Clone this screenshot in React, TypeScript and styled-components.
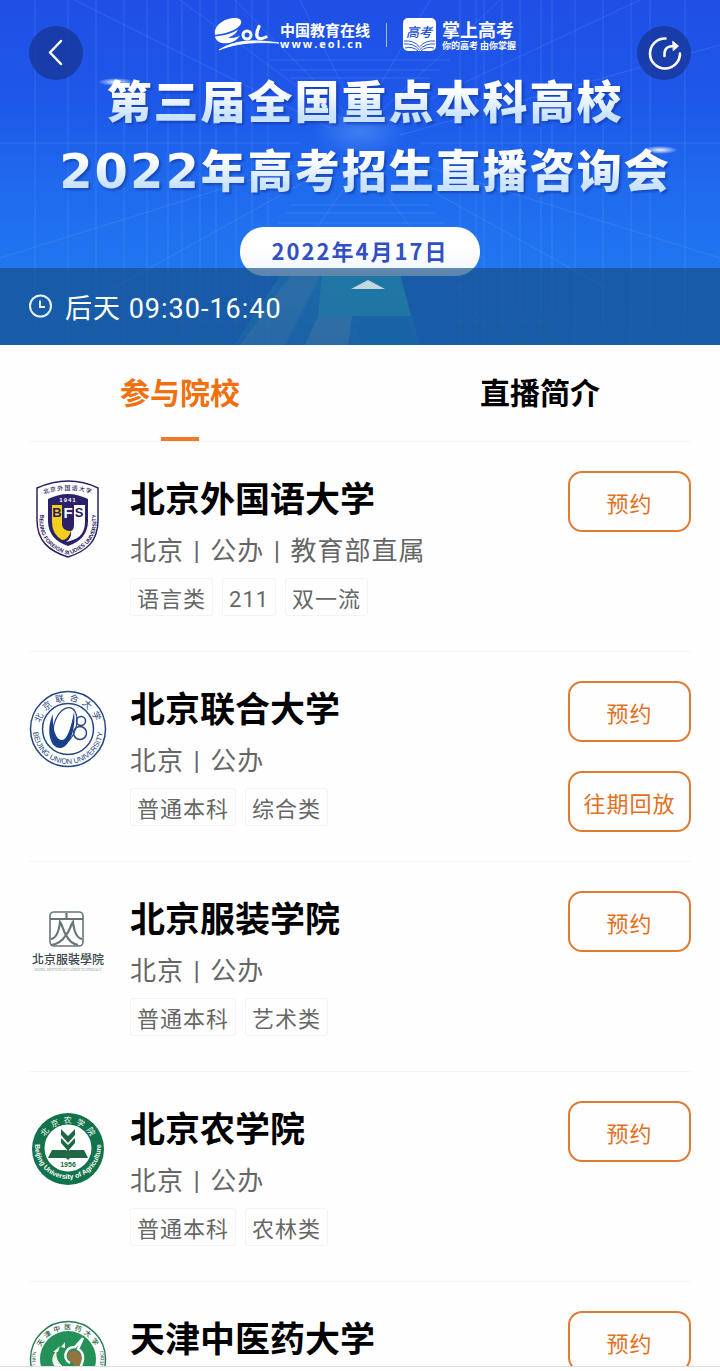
import React, { useState } from 'react';
import styled, { createGlobalStyle } from 'styled-components';

const cjk = `'Noto Sans CJK SC', sans-serif`;
const ui = `Roboto, ${cjk}`;
const orange = '#e2701c';

const GlobalStyle = createGlobalStyle`
  *, *::before, *::after { box-sizing: border-box; }
  body { margin: 0; background: #fefefe; font-family: ${ui}; color: #000; }
  button { font: inherit; padding: 0; cursor: pointer; }
  h1, h2, p, ul { margin: 0; padding: 0; }
`;

const Page = styled.div`
  display: flex;
  flex-direction: column;
  height: 100vh;
`;

/* ---------- hero ---------- */

const Hero = styled.header`
  position: relative;
  flex: none;
  display: flex;
  flex-direction: column;
  align-items: center;
  padding-bottom: 69px;
  overflow: hidden;
  background: linear-gradient(#1f4fe6 0%, #1e58e9 30%, #1f6bee 55%, #2176f0 78%, #2378ee 100%);
`;

const Backdrop = styled.svg`
  position: absolute;
  inset: 0;
  width: 100%;
  height: 100%;
`;

const TopBar = styled.div`
  position: relative;
  align-self: stretch;
  display: flex;
  justify-content: space-between;
  align-items: flex-start;
  height: 65px;
  padding: 16px 29px 0;
`;

const RoundButton = styled.button`
  display: grid;
  place-items: center;
  flex: none;
  width: 54px;
  height: 54px;
  margin-top: 10px;
  border: 0;
  border-radius: 50%;
  background: rgba(22, 50, 140, 0.68);
`;

const Brands = styled.div`
  display: flex;
  align-items: center;
  height: 38px;
  padding-left: 10px;
  color: #fff;
`;

const BrandText = styled.div`
  display: flex;
  flex-direction: column;
`;

const BrandName = styled.span<{ $large?: boolean }>`
  font: 700 ${p => (p.$large ? 18 : 15)}px/${p => (p.$large ? 20 : 17)}px ${cjk};
  white-space: nowrap;
`;

const BrandSite = styled.span`
  font: 700 11px/11px 'Open Sans', sans-serif;
  letter-spacing: 2px;
`;

const BrandSlogan = styled.span`
  font: 700 9px/13px ${cjk};
  white-space: nowrap;
`;

const BrandDivider = styled.i`
  width: 1px;
  height: 24px;
  margin: 0 16px;
  background: rgba(255, 255, 255, 0.6);
`;

const Title = styled.h1`
  position: relative;
  padding-left: 10px;
  text-align: center;
  filter: drop-shadow(2px 2px 1px rgba(15, 50, 160, 0.6));
`;

const TitleLine = styled.span`
  display: block;
  height: 69px;
  font: 900 45px/69px ${cjk};
  letter-spacing: 2px;
  white-space: nowrap;
  color: transparent;
  background: linear-gradient(#fff 35%, #c9e2ff 75%);
  background-clip: text;
  -webkit-background-clip: text;
`;

const Year = styled.span`
  font: 700 48px/60px 'DejaVu Sans', sans-serif;
  letter-spacing: 2px;
`;

const DatePill = styled.p`
  position: relative;
  width: 240px;
  height: 49px;
  margin-top: 24px;
  border-radius: 24px;
  background: linear-gradient(#fff 40%, #eef4ff);
  color: #3150c4;
  font: 700 22px/46px ${cjk};
  letter-spacing: 2px;
  text-align: center;
`;

const TimeBar = styled.div`
  position: absolute;
  inset: auto 0 0;
  display: flex;
  align-items: center;
  gap: 12px;
  height: 77px;
  padding: 0 28px;
  background: rgba(20, 78, 130, 0.66);
  color: #fff;
  font-size: 27px;
  letter-spacing: 1px;
`;

/* ---------- tabs ---------- */

const Tabs = styled.div`
  flex: none;
  display: flex;
  height: 97px;
  margin: 0 29px;
  border-bottom: 1px solid #f5f5f5;
`;

const Tab = styled.button<{ $active: boolean }>`
  position: relative;
  flex: 1;
  border: 0;
  background: none;
  color: ${p => (p.$active ? '#f07010' : '#000')};
  font: 700 30px/92px ${cjk};
  padding-bottom: 6px;

  &:first-child { margin-left: -29px; }
  &:last-child { margin-right: -29px; }

  &::after {
    content: '';
    position: absolute;
    left: 50%;
    bottom: 0;
    width: 38px;
    height: 4px;
    margin-left: -19px;
    background: ${p => (p.$active ? '#f07a24' : 'transparent')};
  }
`;

/* ---------- school list ---------- */

const List = styled.ul`
  flex: 1;
  min-height: 0;
  overflow-y: auto;
  scrollbar-width: none;
  padding: 0 29px;
  list-style: none;
`;

const Row = styled.li`
  display: grid;
  grid-template-columns: 78px 1fr auto;
  column-gap: 23px;
  align-items: start;
  min-height: 210px;
  border-bottom: 1px solid #f6f6f6;
`;

const Crest = styled.svg`
  width: 78px;
  height: 78px;
  margin-top: 38px;
`;

const Info = styled.div`
  padding-top: 30px;
`;

const Name = styled.h2`
  font: 700 35px/50px ${cjk};
`;

const Meta = styled.p`
  padding-top: 3px;
  color: #666;
  font-size: 26px;
  line-height: 52px;
  letter-spacing: 1px;
`;

const Bar = styled.span`
  margin: 0 2px;
`;

const TagList = styled.div`
  display: flex;
  gap: 9px;
  padding-top: 1px;
`;

const Tag = styled.span`
  height: 38px;
  padding: 2px 6px 0;
  border: 1px solid #f3f3f3;
  border-radius: 3px;
  color: #666;
  font-size: 22px;
  line-height: 38px;
  letter-spacing: 1px;
`;

const Actions = styled.div`
  display: flex;
  flex-direction: column;
  gap: 29px;
  padding-top: 29px;
`;

const ActionButton = styled.button`
  width: 123px;
  height: 61px;
  border: 2px solid #e07b35;
  border-radius: 14px;
  background: none;
  color: ${orange};
  font-size: 22px;
  letter-spacing: 1px;
`;

const BottomEdge = styled.footer`
  flex: none;
  height: 5px;
  border-top: 1px solid #ddd;
  background: #fefefe;
`;

/* ---------- drawings ---------- */

const columns = [35, 68, 96, 124, 147, 168, 182, 200, 216, 236, 252, 268, 460, 476, 484, 502, 520, 541, 552, 575, 603, 631, 650, 685];

const HeroBackdrop = () => (
  <Backdrop viewBox="0 0 720 345" preserveAspectRatio="none" aria-hidden="true">
    <defs>
      <linearGradient id="beam" x1="0" y1="0" x2="0" y2="1">
        <stop offset="0" stopColor="#4bd7f0" stopOpacity="0" />
        <stop offset="0.5" stopColor="#43e0e6" stopOpacity="0.5" />
        <stop offset="1" stopColor="#3aa5ee" stopOpacity="0.5" />
      </linearGradient>
      <radialGradient id="core">
        <stop offset="0" stopColor="#79bcff" stopOpacity="0.35" />
        <stop offset="1" stopColor="#79bcff" stopOpacity="0" />
      </radialGradient>
      <radialGradient id="flare">
        <stop offset="0" stopColor="#fff" stopOpacity="0.95" />
        <stop offset="1" stopColor="#fff" stopOpacity="0" />
      </radialGradient>
    </defs>
    <g stroke="#7cb6ff" strokeOpacity="0.2" fill="none">
      {columns.map(x => <path key={x} d={`M${x} 0V345`} />)}
      <path d="M0 143H300M420 143H720M270 60H450M280 70H440M290 78H430M290 205H430M286 213H436M278 223H444M262 237H462M240 257H482M200 288H520M170 322H550" />
      <path d="M75 0 330 128M180 0 340 118M235 0 345 112M300 0 352 105M430 0 368 105M500 0 380 112M640 0 385 120M720 45 400 135M0 258 330 155M110 290 335 165M235 345 350 180M500 345 375 180M610 290 385 165M720 258 390 155" />
    </g>
    <path d="M335 225H385L420 345H235L285 268Z" fill="url(#beam)" opacity="0.7" />
    <path d="M322 274H400L411 316H318Z" fill="#3fdfe0" opacity="0.6" />
    <path d="M290 276H320L285 345H240Z" fill="#9cc6e6" opacity="0.35" />
    <path d="M318 316H352L348 345H305Z" fill="#9cc6e6" opacity="0.5" />
    <path d="M360 318H408L415 345H357Z" fill="#1f8be8" opacity="0.8" />
    <ellipse cx="360" cy="132" rx="48" ry="24" fill="url(#core)" />
    <ellipse cx="116" cy="82" rx="18" ry="4" fill="url(#flare)" />
    <ellipse cx="660" cy="150" rx="18" ry="4" fill="url(#flare)" />
  </Backdrop>
);

const PillArrow = styled.svg`
  position: absolute;
  left: 50%;
  top: 12px;
  margin-left: -9px;
`;

const EolMark = () => (
  <svg width="66" height="36" viewBox="0 0 66 36" role="img" aria-label="eol">
    <path d="M1 18C-1 9 10 1 21 1C29 1 29 7 23 11C17 15 8 17 1 18Z" fill="#fff" />
    <path d="M1 19.500C10 18.500 18 16.500 24 12.500C22 17 18 19.500 14 20.500C18 21.500 23 20.500 26 18.500C21 28 3 29.500 1 19.500Z" fill="#fff" />
    <ellipse cx="33" cy="18" rx="4" ry="4" fill="none" stroke="#fff" strokeWidth="3" />
    <path d="M45 9.500C43 14 42 19.500 44 21C46.500 22 49.500 21.500 52 20" fill="none" stroke="#fff" strokeWidth="3.200" strokeLinecap="round" />
    <path d="M5 33C20 23 40 22 65 26C45 25 24 25 5 33Z" fill="#fff" stroke="#fff" strokeWidth="0.800" />
  </svg>
);

const GaokaoMark = () => (
  <svg width="39" height="34" viewBox="0 0 39 34" role="img" aria-label="高考">
    <rect width="33" height="33" rx="5" fill="#fff" />
    <text x="16" y="19" textAnchor="middle" fontFamily="'Noto Sans CJK SC', sans-serif" fontSize="13" fontWeight="500" fontStyle="italic" fill="#2150d8">高考</text>
    <path d="M1 23Q11 22 16.500 29Q22 22 32 23M1 26Q11 25 16.500 32Q22 25 32 26M2 30Q10 28 15 33M31 30Q23 28 18 33" fill="none" stroke="#2458df" strokeWidth="1" />
  </svg>
);

const BackIcon = () => (
  <svg width="30" height="30" viewBox="0 0 30 30" fill="none" stroke="#fff" strokeWidth="2.500" strokeLinecap="round" strokeLinejoin="round">
    <path d="M20 3 9 14.500 20 26" />
  </svg>
);

const ShareIcon = () => (
  <svg width="36" height="36" viewBox="0 0 36 36" fill="none" stroke="#fff" strokeWidth="2.600" strokeLinecap="round">
    <path d="M19.500 3.500A15 15 0 1 0 34 18.500" />
    <path d="M18.500 21C18 14 21 11 28 11" />
    <path d="M27 6.500 32.500 11 27.500 15.500Z" fill="#fff" strokeWidth="1" strokeLinejoin="round" />
  </svg>
);

const ClockIcon = () => (
  <svg width="25" height="26" viewBox="0 0 25 26" fill="none" stroke="#e8f2fb" strokeWidth="2">
    <circle cx="12.500" cy="12" r="10.500" />
    <path d="M12 6.500V13H17" />
  </svg>
);

const BfsuCrest = () => (
  <Crest viewBox="0 0 78 78" role="img" aria-label="北京外国语大学校徽">
    <defs>
      <path id="bfsu-top" d="M10 16Q39 4 68 16" />
      <path id="bfsu-rim" d="M10.500 24V40C10.500 60 22 69 39 75C56 69 67.500 60 67.500 40V24" />
    </defs>
    <path d="M39 1C51 1 61 4 69 8V40C69 61 58 71 39 77C20 71 8 61 8 40V8C17 4 27 1 39 1Z" fill="#fff" stroke="#2b2360" strokeWidth="1.500" />
    <path d="M39 14C46 14 53 16 59 19V41C59 54 51 62 39 66C27 62 19 54 19 41V19C25 16 32 14 39 14Z" fill="#2a2168" />
    <path d="M23 25H33V45Q34 51 42 51Q39 60 33 60Q23 54 23 42Z" fill="#f6cf1c" />
    <path d="M45 25H56V42C56 55 48 60 37 62Q43 58 42 51Q45 50 45 45Z" fill="#fff" />
    <g fontFamily="'Liberation Sans', sans-serif" fontWeight="700" textAnchor="middle">
      <text x="28" y="37" fontSize="13" fill="#231b58">B</text>
      <text x="39" y="38" fontSize="15" fill="#fff">F</text>
      <text x="50" y="37" fontSize="13" fill="#231b58">S</text>
      <text x="39" y="22" fontSize="6" letterSpacing="1" fill="#fff">1941</text>
    </g>
    <text fontFamily="'Noto Sans CJK SC', sans-serif" fontSize="6" fontWeight="500" fill="#2b2360" letterSpacing="1"><textPath href="#bfsu-top" startOffset="50%" textAnchor="middle">北京外国语大学</textPath></text>
    <text fontFamily="'Liberation Sans', sans-serif" fontSize="5.500" fontWeight="700" fill="#2b2360"><textPath href="#bfsu-rim" startOffset="50%" textAnchor="middle">BEIJING FOREIGN STUDIES UNIVERSITY</textPath></text>
  </Crest>
);

const BuuCrest = () => (
  <Crest viewBox="0 0 78 78" role="img" aria-label="北京联合大学校徽">
    <defs>
      <path id="buu-top" d="M11 39A28 28 0 0 1 67 39" />
      <path id="buu-rim" d="M4.500 33A35 35 0 1 0 73.500 33" />
    </defs>
    <g fill="none" stroke="#24477f">
      <circle cx="39" cy="39" r="37.500" strokeWidth="1.500" />
      <circle cx="39" cy="39" r="25.500" strokeWidth="1.500" />
      <ellipse cx="36" cy="36" rx="11" ry="19" transform="rotate(18 36 36)" strokeWidth="1.200" />
      <circle cx="52" cy="31" r="4.500" strokeWidth="1.500" />
      <circle cx="51" cy="43" r="6.500" strokeWidth="1.500" />
    </g>
    <path d="M24 24C17 38 20 59 32 58C42 56 47 36 45 22C42 38 38 50 33 50C26 50 23 36 24 24Z" fill="#173f8a" />
    <text fontFamily="'Noto Sans CJK SC', sans-serif" fontSize="9" fill="#24477f" letterSpacing="4"><textPath href="#buu-top" startOffset="51%" textAnchor="middle">北京联合大学</textPath></text>
    <text fontFamily="'Liberation Sans', sans-serif" fontSize="7.500" fill="#24477f"><textPath href="#buu-rim" startOffset="50%" textAnchor="middle">BEIJING UNION UNIVERSITY</textPath></text>
  </Crest>
);

const BiftCrest = () => (
  <Crest viewBox="0 0 78 78" role="img" aria-label="北京服装学院标志">
    <rect x="21" y="12" width="33" height="34" rx="4" fill="none" stroke="#68757a" strokeWidth="1.600" />
    <path d="M21 19H54M37.500 13V19M22 39C28 38 30 31 31 22C34 26 34 31 37 35C41 31 41 26 44 22C45 31 47 38 53 39M22 45C30 44 34 40 37 35C40 41 43 44 49 45" fill="none" stroke="#68757a" strokeWidth="2.200" />
    <text x="39" y="64" textAnchor="middle" fontFamily="'Noto Sans CJK TC', serif" fontSize="12" fontWeight="500" fill="#39464b">北京服裝學院</text>
    <text x="39" y="71" textAnchor="middle" fontFamily="'Liberation Serif', serif" fontSize="3" fill="#8a9498">BEIJING INSTITUTE OF FASHION TECHNOLOGY</text>
  </Crest>
);

const BuaCrest = () => (
  <Crest viewBox="0 0 78 78" role="img" aria-label="北京农学院校徽">
    <defs>
      <path id="bua-top" d="M13 39A26 26 0 0 1 65 39" />
      <path id="bua-rim" d="M6 36A33 33 0 1 0 72 36" />
    </defs>
    <circle cx="39" cy="39" r="36" fill="#12724a" />
    <circle cx="39" cy="38" r="23.500" fill="#fff" />
    <path d="M39 26 32 19V25L39 33 46 25V19ZM39 35 32 28V33L39 41 46 33V28Z" fill="#206744" />
    <path d="M23 40 37 40 39 42 41 40H55L59 48H41L39 50 37 48H19Z" fill="#206744" />
    <path d="M39 36V44" stroke="#206744" strokeWidth="2" />
    <text x="39" y="57" textAnchor="middle" fontFamily="'Liberation Sans', sans-serif" fontSize="7" fontWeight="700" fill="#206744">1956</text>
    <text fontFamily="'Noto Sans CJK SC', sans-serif" fontSize="8" fill="#fff" letterSpacing="4"><textPath href="#bua-top" startOffset="52%" textAnchor="middle">北京农学院</textPath></text>
    <text fontFamily="'Liberation Sans', sans-serif" fontSize="7" fontWeight="700" fill="#fff"><textPath href="#bua-rim" startOffset="50%" textAnchor="middle">Beijing University of Agriculture</textPath></text>
  </Crest>
);

const TutcmCrest = () => (
  <Crest viewBox="0 0 78 78" role="img" aria-label="天津中医药大学校徽">
    <defs>
      <path id="tcm-top" d="M9.500 39A29.500 29.500 0 0 1 68.500 39" />
      <path id="tcm-rim" d="M4 30A36 36 0 1 0 74 30" />
    </defs>
    <circle cx="39" cy="39" r="37.500" fill="#fff" stroke="#2c7a55" strokeWidth="1.500" />
    <circle cx="39" cy="39" r="28" fill="#249158" />
    <path d="M35 52C22 48 20 38 28 30C26 38 30 45 37 48ZM24 32 31 26 29 32ZM32 27 36 22 36 28Z" fill="#e8f5e8" />
    <path d="M41 43C33 39 36 27 46 27L54 18L49 29C58 34 54 48 43 56" fill="none" stroke="#fff" strokeWidth="2.500" />
    <path d="M42 42C35 36 40 29 47 31C57 34 52 47 43 53C47 48 47 45 42 42Z" fill="#93743e" />
    <text fontFamily="'Noto Sans CJK SC', sans-serif" fontSize="7" fontWeight="500" fill="#275c43" letterSpacing="3"><textPath href="#tcm-top" startOffset="51%" textAnchor="middle">天津中医药大学</textPath></text>
    <text fontFamily="'Liberation Sans', sans-serif" fontSize="5" fill="#275c43"><textPath href="#tcm-rim" startOffset="50%" textAnchor="middle">TIANJIN UNIVERSITY OF TRADITIONAL CHINESE MEDICINE</textPath></text>
  </Crest>
);

/* ---------- data and page ---------- */

interface School {
  name: string;
  meta: string[];
  tags: string[];
  replay?: boolean;
  Logo: React.FC;
}

const schools: School[] = [
  { name: '北京外国语大学', meta: ['北京', '公办', '教育部直属'], tags: ['语言类', '211', '双一流'], Logo: BfsuCrest },
  { name: '北京联合大学', meta: ['北京', '公办'], tags: ['普通本科', '综合类'], replay: true, Logo: BuuCrest },
  { name: '北京服装学院', meta: ['北京', '公办'], tags: ['普通本科', '艺术类'], Logo: BiftCrest },
  { name: '北京农学院', meta: ['北京', '公办'], tags: ['普通本科', '农林类'], Logo: BuaCrest },
  { name: '天津中医药大学', meta: [], tags: [], Logo: TutcmCrest },
];

const SchoolRow = ({ name, meta, tags, replay, Logo }: School) => (
  <Row>
    <Logo />
    <Info>
      <Name>{name}</Name>
      {meta.length > 0 && (
        <Meta>
          {meta.map((item, i) => (
            <React.Fragment key={item}>
              {i > 0 && <Bar> | </Bar>}
              {item}
            </React.Fragment>
          ))}
        </Meta>
      )}
      <TagList>{tags.map(t => <Tag key={t}>{t}</Tag>)}</TagList>
    </Info>
    <Actions>
      <ActionButton type="button">预约</ActionButton>
      {replay && <ActionButton type="button">往期回放</ActionButton>}
    </Actions>
  </Row>
);

const tabs = ['参与院校', '直播简介'];

export default function App() {
  const [active, setActive] = useState(0);
  return (
    <Page>
      <GlobalStyle />
      <Hero>
        <HeroBackdrop />
        <TopBar>
          <RoundButton type="button" aria-label="返回"><BackIcon /></RoundButton>
          <Brands>
            <EolMark />
            <BrandText>
              <BrandName>中国教育在线</BrandName>
              <BrandSite>www.eol.cn</BrandSite>
            </BrandText>
            <BrandDivider />
            <GaokaoMark />
            <BrandText>
              <BrandName $large>掌上高考</BrandName>
              <BrandSlogan>你的高考 由你掌握</BrandSlogan>
            </BrandText>
          </Brands>
          <RoundButton type="button" aria-label="分享"><ShareIcon /></RoundButton>
        </TopBar>
        <Title>
          <TitleLine>第三届全国重点本科高校</TitleLine>
          <TitleLine><Year>2022</Year>年高考招生直播咨询会</TitleLine>
        </Title>
        <DatePill>2022年4月17日</DatePill>
        <TimeBar>
          <ClockIcon />
          <span>后天 09:30-16:40</span>
          <PillArrow width="34" height="9" viewBox="0 0 34 9" aria-hidden="true">
            <path d="M0 9 17 0 34 9Z" fill="#c3d8de" />
          </PillArrow>
        </TimeBar>
      </Hero>
      <Tabs role="tablist">
        {tabs.map((label, i) => (
          <Tab key={label} type="button" role="tab" aria-selected={active === i} $active={active === i} onClick={() => setActive(i)}>
            {label}
          </Tab>
        ))}
      </Tabs>
      <List>
        {schools.map(s => <SchoolRow key={s.name} {...s} />)}
      </List>
      <BottomEdge />
    </Page>
  );
}
